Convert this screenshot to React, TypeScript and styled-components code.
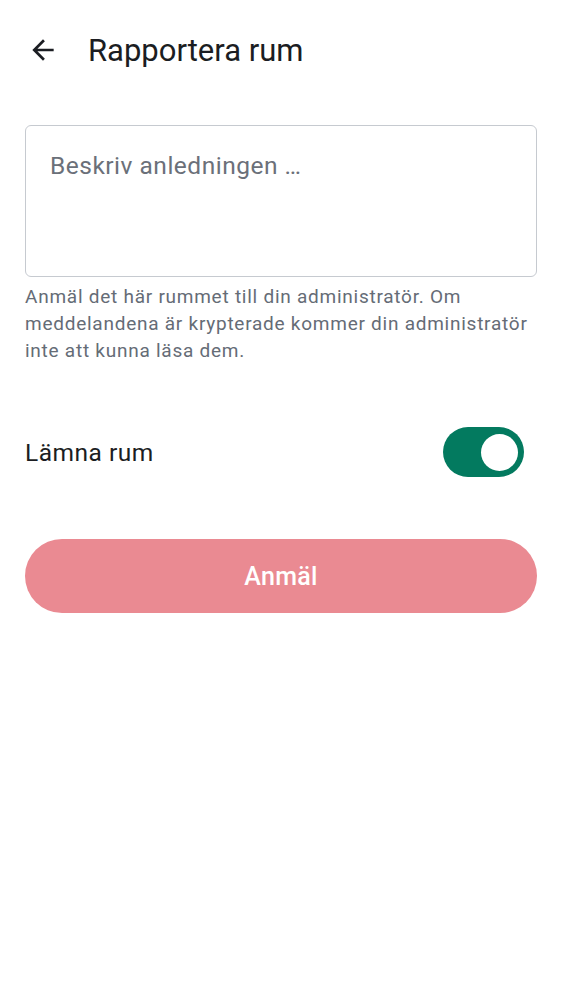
import React, { useState } from 'react';
import styled, { createGlobalStyle } from 'styled-components';

const GlobalStyle = createGlobalStyle`
  html, body {
    margin: 0;
    padding: 0;
    background: #ffffff;
  }
  body {
    font-family: Roboto, "Noto Sans", "Liberation Sans", sans-serif;
    -webkit-font-smoothing: antialiased;
  }
  * {
    box-sizing: border-box;
  }
`;

const Screen = styled.div`
  width: 562px;
  min-height: 1000px;
  background: #ffffff;
  display: flex;
  flex-direction: column;
`;

const TopBar = styled.header`
  height: 100px;
  display: flex;
  align-items: center;
  padding-left: 27px;
  gap: 29px;
`;

const BackButton = styled.button`
  width: 32px;
  height: 32px;
  padding: 0;
  border: none;
  background: transparent;
  display: flex;
  align-items: center;
  justify-content: center;
  color: #1b1d22;
  cursor: pointer;
`;

const Title = styled.h1`
  margin: 0;
  font-size: 31px;
  font-weight: 400;
  color: #1b1d22;
  letter-spacing: 0;
`;

const Content = styled.main`
  padding: 25px 25px 0;
  display: flex;
  flex-direction: column;
`;

const ReasonField = styled.textarea`
  width: 100%;
  height: 152px;
  resize: none;
  border: 1.5px solid #c6cad0;
  border-radius: 6px;
  padding: 23px 24px;
  font-family: inherit;
  font-size: 24.5px;
  letter-spacing: 0.5px;
  line-height: 1.4;
  color: #1b1d22;
  outline: none;

  &::placeholder {
    color: #6b7079;
  }
`;

const Helper = styled.p`
  margin: 6px 0 0;
  font-size: 19px;
  line-height: 27px;
  letter-spacing: 0.75px;
  color: #656c76;
`;

const SwitchRow = styled.label`
  margin-top: 63px;
  display: flex;
  align-items: center;
  justify-content: space-between;
  padding-right: 13px;
  cursor: pointer;
`;

const RowLabel = styled.span`
  font-size: 24.5px;
  letter-spacing: 0.5px;
  color: #1b1d22;
`;

const Track = styled.span<{ $on: boolean }>`
  width: 81px;
  height: 50px;
  border-radius: 25px;
  background: ${(p) => (p.$on ? '#037a5f' : '#e1e6ec')};
  display: flex;
  align-items: center;
  justify-content: ${(p) => (p.$on ? 'flex-end' : 'flex-start')};
  padding: 0 6px;
`;

const Thumb = styled.span`
  width: 37px;
  height: 37px;
  border-radius: 50%;
  background: #ffffff;
`;

const HiddenCheck = styled.input`
  display: none;
`;

const SubmitButton = styled.button`
  margin-top: 62px;
  width: 100%;
  height: 74px;
  border: none;
  border-radius: 37px;
  background: #ea8a92;
  color: #ffffff;
  font-family: inherit;
  font-size: 25px;
  font-weight: 500;
  letter-spacing: 0.3px;
`;

const App: React.FC = () => {
  const [leave, setLeave] = useState(true);
  const [reason, setReason] = useState('');

  return (
    <>
      <GlobalStyle />
      <Screen>
        <TopBar>
          <BackButton aria-label="Tillbaka">
            <svg width="32" height="32" viewBox="0 0 24 24" fill="currentColor">
              <path d="M20 11H7.83l5.59-5.59L12 4l-8 8 8 8 1.41-1.41L7.83 13H20v-2z" />
            </svg>
          </BackButton>
          <Title>Rapportera rum</Title>
        </TopBar>
        <Content>
          <ReasonField
            placeholder="Beskriv anledningen …"
            value={reason}
            onChange={(e) => setReason(e.target.value)}
          />
          <Helper>
            Anmäl det här rummet till din administratör. Om meddelandena är krypterade kommer din
            administratör inte att kunna läsa dem.
          </Helper>
          <SwitchRow>
            <RowLabel>Lämna rum</RowLabel>
            <HiddenCheck type="checkbox" checked={leave} onChange={() => setLeave(!leave)} />
            <Track $on={leave}>
              <Thumb />
            </Track>
          </SwitchRow>
          <SubmitButton disabled={reason.length === 0}>Anmäl</SubmitButton>
        </Content>
      </Screen>
    </>
  );
};

export default App;
